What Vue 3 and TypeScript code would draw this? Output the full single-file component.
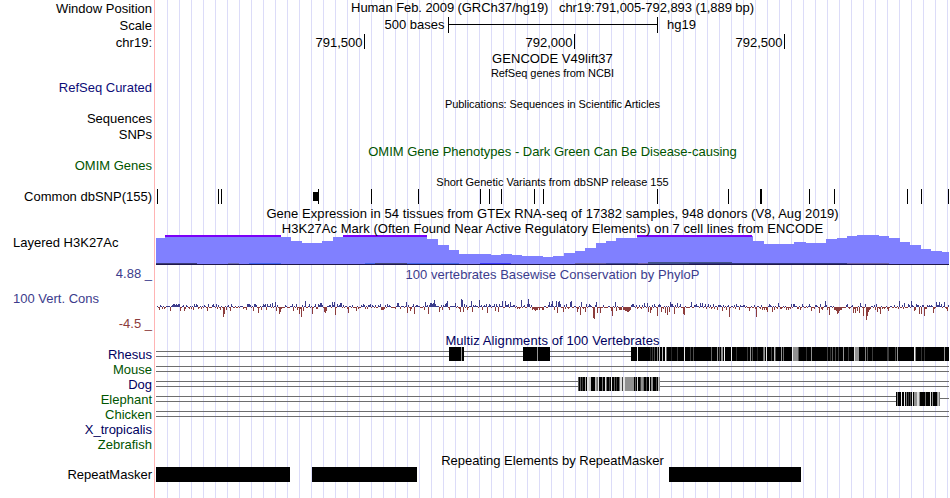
<template>
  <div class="browser">
    <div
      v-for="track in tracks"
      :key="track.id"
      class="track"
      :style="{ height: track.height + 'px' }"
    >
      <div class="side">
        <span
          v-for="label in track.labels"
          :key="label.text"
          class="label"
          :class="[label.tone, { 'label-left': label.left }]"
          :style="{ marginTop: label.gap + 'px' }"
        >{{ label.text }}</span>
      </div>

      <div class="plot">
        <div
          v-if="track.title"
          class="title"
          :class="[track.titleTone, { small: track.small, lowered: track.lowered }]"
          :style="{ letterSpacing: (track.spacing ?? 0) + 'px' }"
        >{{ track.title }}</div>

        <svg v-if="track.id === 'scale'" class="chart" :viewBox="box(17)" width="793" height="17">
          <text x="444.5" y="12" text-anchor="end">500 bases</text>
          <rect x="448" y="0" width="1" height="16" />
          <rect x="448" y="7" width="210" height="1" />
          <rect x="657" y="0" width="1" height="16" />
          <text x="667" y="12">hg19</text>
        </svg>

        <svg v-if="track.id === 'ruler'" class="chart" :viewBox="box(17)" width="793" height="17">
          <g v-for="mark in ruler" :key="mark.x">
            <text :x="mark.x - 1.5" y="13" text-anchor="end">{{ mark.text }}</text>
            <rect :x="mark.x" y="0" width="1" height="15" />
          </g>
        </svg>

        <svg v-if="track.id === 'snp'" class="chart" :viewBox="box(15)" width="793" height="15">
          <rect v-for="x in snps" :key="x" :x="x" y="0" width="1" height="15" />
          <rect x="313" y="3" width="5" height="9" />
        </svg>

        <svg v-if="track.id === 'h3k27ac'" class="chart under" viewBox="156 235 793 31" width="793" height="31">
          <path :d="signalPath" fill="#8080ff" />
          <rect v-for="x in clipped" :key="x[0]" :x="x[0]" y="235" :width="x[1] - x[0]" height="2" fill="#7c00f8" />
          <rect
            v-for="(s, i) in lowSignals"
            :key="i"
            :x="s.x"
            :y="264 - s.h"
            :width="s.w"
            :height="s.h"
            :fill="s.color"
          />
          <rect x="156" y="264" width="793" height="1" fill="#20184c" />
        </svg>

        <svg v-if="track.id === 'cons'" class="chart" viewBox="156 282 793 49" width="793" height="49">
          <path :d="conservation.up" fill="#3c3c8c" />
          <path :d="conservation.down" fill="#8c3c3c" />
        </svg>

        <svg v-if="track.species" class="chart" :viewBox="box(15)" width="793" height="15">
          <g v-if="track.species.lines" fill="#6e6e6e">
            <rect x="156" y="4" :width="track.id === 'elephant' ? 784 : 793" height="1" />
            <rect x="156" y="9" :width="track.id === 'elephant' ? 784 : 793" height="1" />
            <rect v-if="track.id === 'elephant'" x="940" y="6" width="9" height="1" />
          </g>
          <rect
            v-for="block in track.species.blocks"
            :key="block[0]"
            :x="block[0]"
            y="0"
            :width="block[1] - block[0]"
            height="14"
          />
          <rect
            v-for="(s, i) in track.species.stripes"
            :key="'s' + i"
            :x="s[0]"
            y="0"
            :width="s[1]"
            height="14"
            :fill="`rgb(${s[2]}, ${s[2]}, ${s[2]})`"
          />
        </svg>

        <svg v-if="track.id === 'repeats'" class="chart under" :viewBox="box(15)" width="793" height="15">
          <rect v-for="r in repeats" :key="r[0]" :x="r[0]" y="0" :width="r[1] - r[0]" height="15" />
        </svg>
      </div>
    </div>
  </div>
</template>

<script setup lang="ts">
interface Label {
  text: string
  gap: number
  tone?: string
  left?: boolean
}

interface Species {
  lines: boolean
  blocks: number[][]
  stripes: number[][]
}

interface Track {
  id: string
  height: number
  labels: Label[]
  title?: string
  titleTone?: string
  small?: boolean
  lowered?: boolean
  spacing?: number
  species?: Species
}

// x values are image coordinates, the plot starts at 156
const box = (height: number) => `156 0 793 ${height}`

// stripes are [x, width, grey level]
const rhesus: number[][] = [
  [461, 1, 150], [537, 1, 150],
  [637, 1, 240], [650, 1, 40], [652, 1, 60], [654, 1, 75], [657, 1, 130], [659, 1, 190],
  [662, 1, 190], [665, 1, 250], [666, 1, 110], [671, 1, 40], [677, 1, 60], [684, 1, 235],
  [690, 1, 60], [693, 1, 80], [711, 1, 100], [717, 1, 150], [719, 1, 70], [721, 2, 145],
  [724, 1, 245], [731, 1, 235], [736, 1, 50], [747, 1, 60], [750, 1, 150], [752, 1, 80],
  [757, 1, 40], [763, 1, 110], [764, 1, 150], [766, 1, 230], [771, 1, 70], [774, 1, 190],
  [775, 1, 80], [781, 1, 150], [783, 1, 110], [792, 1, 240], [793, 5, 145], [798, 1, 80],
  [806, 1, 50], [811, 1, 145], [827, 1, 65], [830, 1, 45], [832, 1, 90], [835, 1, 70],
  [838, 1, 60], [843, 1, 150], [848, 1, 60], [854, 1, 225], [855, 4, 145], [865, 1, 130],
  [867, 1, 80], [872, 1, 60], [887, 2, 60], [895, 1, 80], [897, 1, 150], [914, 1, 245],
  [915, 1, 130], [921, 1, 50], [924, 1, 50], [944, 1, 145]
]

const dog: number[][] = [
  [578, 1, 90], [580, 1, 90], [582, 1, 60], [585, 1, 170], [587, 2, 225], [589, 2, 200],
  [595, 1, 190], [596, 1, 145], [597, 1, 110], [598, 1, 225], [602, 1, 120], [605, 1, 230],
  [606, 1, 110], [609, 1, 70], [611, 1, 235], [614, 1, 100], [616, 1, 60], [619, 1, 110],
  [620, 2, 220], [622, 1, 60], [623, 2, 225], [625, 9, 145], [635, 1, 90], [637, 1, 220],
  [640, 1, 60], [641, 2, 145], [643, 1, 110], [646, 1, 80], [649, 1, 225], [651, 2, 145],
  [656, 1, 80], [658, 1, 200], [659, 1, 145]
]

const elephant: number[][] = [
  [897, 1, 130], [901, 1, 240], [904, 1, 235], [906, 1, 130], [908, 1, 60], [910, 1, 80],
  [912, 1, 235], [914, 3, 145], [917, 2, 220], [919, 1, 130], [925, 1, 110], [930, 1, 225],
  [932, 1, 150], [937, 1, 145], [938, 1, 190], [939, 1, 120]
]

const aligned = (id: string, text: string, tone: string, blocks: number[][] = [], stripes: number[][] = [], lines = true): Track => ({
  id,
  height: 15,
  labels: [{ text, gap: 0, tone }],
  species: { lines, blocks, stripes }
})

const tracks: Track[] = [
  {
    id: 'position',
    height: 17,
    labels: [{ text: 'Window Position', gap: 1 }],
    title: 'Human Feb. 2009 (GRCh37/hg19)\u00a0\u00a0\u00a0chr19:791,005-792,893 (1,889 bp)',
    spacing: -0.075
  },
  { id: 'scale', height: 17, labels: [{ text: 'Scale', gap: 1 }] },
  { id: 'ruler', height: 17, labels: [{ text: 'chr19:', gap: 1 }] },
  { id: 'gencode', height: 14, labels: [], title: 'GENCODE V49lift37', spacing: 0.05 },
  {
    id: 'refseq',
    height: 31,
    labels: [{ text: 'RefSeq Curated', gap: 15, tone: 'blue' }],
    title: 'RefSeq genes from NCBI',
    small: true,
    lowered: true,
    spacing: -0.04
  },
  {
    id: 'pubs',
    height: 31,
    labels: [{ text: 'Sequences', gap: 15 }],
    title: 'Publications: Sequences in Scientific Articles',
    small: true,
    lowered: true,
    spacing: -0.055
  },
  { id: 'pubsSnps', height: 17, labels: [{ text: 'SNPs', gap: 0 }] },
  {
    id: 'omim',
    height: 30,
    labels: [{ text: 'OMIM Genes', gap: 14, tone: 'green' }],
    title: 'OMIM Gene Phenotypes - Dark Green Can Be Disease-causing',
    titleTone: 'green'
  },
  {
    id: 'snp',
    height: 32,
    labels: [{ text: 'Common dbSNP(155)', gap: 15 }],
    title: 'Short Genetic Variants from dbSNP release 155',
    small: true,
    lowered: true,
    spacing: -0.02
  },
  {
    id: 'gtex',
    height: 15,
    labels: [],
    title: 'Gene Expression in 54 tissues from GTEx RNA-seq of 17382 samples, 948 donors (V8, Aug 2019)',
    spacing: 0.055
  },
  {
    id: 'h3k27ac',
    height: 45,
    labels: [{ text: 'Layered H3K27Ac', gap: 14, left: true }],
    title: 'H3K27Ac Mark (Often Found Near Active Regulatory Elements) on 7 cell lines from ENCODE',
    spacing: 0.045
  },
  {
    id: 'cons',
    height: 67,
    labels: [
      { text: '4.88 _', gap: 0, tone: 'slate' },
      { text: '100 Vert. Cons', gap: 10, tone: 'slate', left: true },
      { text: '-4.5 _', gap: 10, tone: 'brown' }
    ],
    title: '100 vertebrates Basewise Conservation by PhyloP',
    titleTone: 'slate',
    lowered: true,
    spacing: 0.04
  },
  {
    id: 'multiz',
    height: 14,
    labels: [],
    title: 'Multiz Alignments of 100 Vertebrates',
    titleTone: 'navy',
    spacing: 0.09
  },
  aligned('rhesus', 'Rhesus', 'navy', [[449, 464], [523, 550], [631, 949]], rhesus),
  aligned('mouse', 'Mouse', 'green'),
  aligned('dog', 'Dog', 'navy', [[578, 660]], dog),
  aligned('elephant', 'Elephant', 'green', [[896, 940]], elephant),
  aligned('chicken', 'Chicken', 'green'),
  aligned('xenopus', 'X_tropicalis', 'navy', [], [], false),
  aligned('zebrafish', 'Zebrafish', 'green', [], [], false),
  {
    id: 'repeats',
    height: 46,
    labels: [{ text: 'RepeatMasker', gap: 15 }],
    title: 'Repeating Elements by RepeatMasker',
    lowered: true
  }
]

const ruler = [
  { x: 364, text: '791,500' },
  { x: 574, text: '792,000' },
  { x: 784, text: '792,500' }
]

const snps = [157, 218, 221, 318, 371, 418, 480, 489, 501, 534, 543, 657, 728, 760, 761, 809, 834, 907, 921, 948]

const repeats = [[156, 290], [312, 417], [669, 801]]

// [start x, top y] of every step in the H3K27Ac signal
const signal = [
  [156, 238], [165, 236], [281, 237], [291, 241], [302, 243], [322, 241], [333, 237], [343, 236],
  [427, 239], [438, 245], [449, 250], [459, 254], [491, 255], [501, 254], [512, 255], [522, 256],
  [543, 257], [553, 256], [564, 253], [575, 251], [585, 248], [596, 243], [606, 241], [616, 238],
  [637, 236], [753, 241], [764, 244], [794, 242], [806, 243], [826, 239], [837, 238], [847, 236],
  [857, 235], [879, 236], [889, 238], [900, 242], [910, 245], [921, 249], [931, 251], [942, 252]
]
const signalPath = 'M156 264' + signal.map(([x, y]) => `H${x}V${y}`).join('') + 'H949V264Z'

const clipped = [[165, 281], [343, 427], [637, 752]]

const lowSignals = [
  { x: 156, w: 41, h: 1, color: '#3a3a78' },
  { x: 228, w: 11, h: 1, color: '#6c6cb0' },
  { x: 249, w: 32, h: 1, color: '#4466f4' },
  { x: 365, w: 94, h: 1, color: '#4466e8' },
  { x: 375, w: 32, h: 1, color: '#404478' },
  { x: 480, w: 31, h: 1, color: '#3c3cff' },
  { x: 575, w: 31, h: 1, color: '#6860a0' },
  { x: 606, w: 32, h: 1, color: '#404898' },
  { x: 638, w: 10, h: 1, color: '#7060a0' },
  { x: 648, w: 84, h: 2, color: '#405088' },
  { x: 689, w: 158, h: 1, color: '#30347c' },
  { x: 847, w: 42, h: 1, color: '#6c60a4' }
]

const peaks: Record<number, number> = {
  160: 2, 172: 2, 173: 3, 174: 3, 175: 2, 176: 3, 177: 2, 178: 3, 179: 3, 184: 3, 196: 3, 213: 3, 218: 2,
  223: 3, 231: 3, 248: 3, 249: 3, 265: 3, 267: 3, 270: 3, 272: 4, 275: 5, 292: 3, 305: 6, 318: 3, 320: 4,
  321: 4, 332: 5, 334: 5, 340: 4, 341: 4, 363: 3, 397: 4, 398: 4, 406: 5, 413: 3, 425: 5, 429: 2, 430: 4,
  431: 4, 432: 3, 433: 4, 434: 7, 435: 3, 445: 3, 446: 4, 447: 6, 455: 4, 461: 8, 462: 7, 471: 6, 479: 7,
  486: 3, 502: 6, 505: 6, 510: 5, 521: 7, 527: 3, 528: 8, 529: 3, 549: 5, 552: 6, 556: 6, 558: 5, 559: 6,
  570: 5, 571: 6, 581: 5, 596: 5, 615: 5, 633: 3, 644: 4, 647: 4, 670: 5, 672: 3, 677: 4, 691: 5, 700: 4,
  702: 4, 778: 4, 816: 2, 825: 6, 860: 4, 876: 3, 899: 6, 904: 4, 911: 6, 923: 2, 936: 5, 939: 5, 944: 5,
  159: -3, 162: -2, 170: -4, 180: -4, 184.5: -4, 193: -3, 207: -4, 220: -3, 223.5: -10, 224: -7, 230: -4,
  246: -3, 253: -4, 258: -6, 276: -4, 279: -7, 280: -5, 293: -4, 299: -7, 301: -10, 303: -4, 312: -7,
  324: -5, 325: -6, 326: -4, 335: -8, 348: -6, 356: -4, 383: -3, 407: -6, 410: -4, 414: -7, 428: -7,
  439: -5, 460: -5, 463: -5, 472: -5, 487: -6, 495: -4, 498: -5, 533: -2, 534: -3, 535: -4, 536: -3,
  537: -3, 557: -6, 563: -5, 577: -5, 580: -8, 585: -5, 593: -11, 594: -12, 597: -6, 600: -6, 611: -4,
  612: -9, 616: -4, 624: -3, 625: -4, 626: -4, 627: -5, 628: -5, 629: -4, 630: -3, 648: -5, 650: -6,
  657: -9, 661: -5, 665: -6, 667: -8, 669: -5, 674: -7, 683: -7, 684: -8, 722: -4, 729: -10, 749: -4,
  756: -10, 762: -3, 767: -5, 772: -5, 811: -4, 819: -6, 829: -8, 834: -3, 835: -3, 836: -4, 837: -7,
  838: -6, 839: -4, 840: -3, 841: -3, 853: -6, 855: -6, 857: -4, 859: -6, 863: -9, 866: -13, 867: -9,
  868: -5, 877: -5, 880: -7, 888: -4, 914: -4, 915: -3, 919: -7, 921: -7, 924: -9, 933: -6, 947: -4
}

// small scores between the peaks
function background(x: number) {
  const n = Math.sin(x * 12.9898) * 43758.5453
  const r = n - Math.floor(n)
  if (r < 0.08) return -3
  if (r < 0.2) return -2
  if (r < 0.47) return -1
  if (r < 0.76) return 1
  if (r < 0.92) return 2
  return 3
}

function buildConservation() {
  let up = ''
  let down = ''
  for (let x = 157; x < 949; x++) {
    const score = peaks[x + 0.5] ?? peaks[x] ?? background(x)
    if (score > 0) up += `M${x} 307v${-score}h1v${score}z`
    else down += `M${x} 307v${-score}h1v${score}z`
  }
  return { up, down }
}

const conservation = buildConservation()
</script>

<style>
body {
  background: #fff;
}
</style>

<style scoped>
.browser {
  width: 950px;
  height: 498px;
  overflow: hidden;
  font-family: "Liberation Sans", Arial, sans-serif;
  font-size: 13px;
  line-height: 15px;
  color: #000;
  background:
    linear-gradient(#ffb4b4, #ffb4b4) 154px 0 / 1px 100% no-repeat,
    repeating-linear-gradient(to right, #dcdcf8 0 1px, transparent 1px 12px) 167px 0 / 782px 100% no-repeat;
}

.track {
  display: grid;
  grid-template-columns: 152px 793px;
  column-gap: 4px;
}

.side {
  display: flex;
  flex-direction: column;
  align-items: flex-end;
}

.label {
  height: 15px;
  white-space: pre;
}

.label-left {
  align-self: flex-start;
  padding-left: 13px;
}

.plot {
  display: flex;
  flex-direction: column;
}

.title {
  height: 15px;
  text-align: center;
  white-space: nowrap;
  position: relative;
  z-index: 1;
}

.small {
  font-size: 11px;
}

.lowered {
  padding-top: 1px;
}

.small.lowered {
  height: 14px;
}

.chart {
  display: block;
  flex: none;
  shape-rendering: crispEdges;
}

.under {
  margin-top: -1px;
}

.blue {
  color: #0c0c78;
}

.navy {
  color: #000060;
}

.green {
  color: #005400;
}

.slate {
  color: #3c3c8c;
}

.brown {
  color: #8c3c3c;
}
</style>
